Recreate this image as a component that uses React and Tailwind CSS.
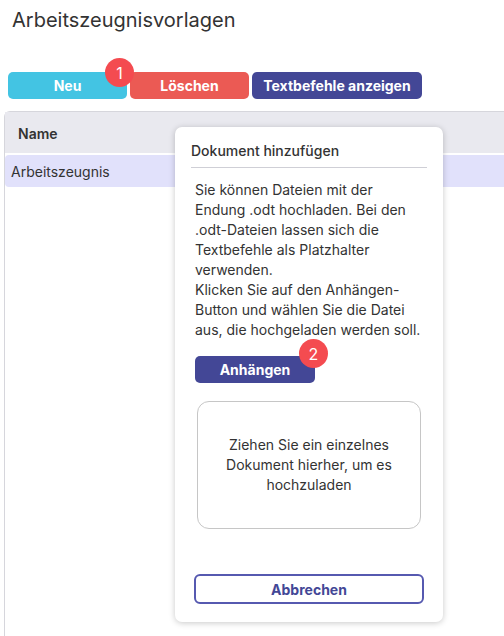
import React from "react";

export default function App() {
  return (
    <div className="relative h-[636px] w-[504px] overflow-hidden bg-white text-[#333] font-['Inter','Noto_Sans',sans-serif]">
      <h1 className="pl-[12px] pt-[7px] text-[20px] leading-[26px] font-normal text-[#333]">Arbeitszeugnisvorlagen</h1>
      <div className="mt-[39px] flex gap-[3px] pl-[8px]">
        <div className="relative">
          <button className="h-[27px] w-[119px] rounded-[5px] bg-[#43c4e3] text-[14px] font-bold text-white">Neu</button>
          <span className="absolute left-[97px] top-[-14px] flex h-[29px] w-[29px] items-center justify-center rounded-full bg-[#f44b50] text-[16px] text-white">1</span>
        </div>
        <button className="h-[27px] w-[119px] rounded-[5px] bg-[#eb5a54] text-[14px] font-bold text-white">Löschen</button>
        <button className="h-[27px] w-[170px] rounded-[5px] bg-[#434796] text-[14px] font-bold text-white">Textbefehle anzeigen</button>
      </div>
      <div className="ml-[4px] mt-[12px] h-[600px] w-[560px] rounded-tl-[6px] border-l border-t border-[#d6d6dc]">
        <div className="flex h-[41px] items-center bg-[#e9e9ef] pl-[13px] pt-[2px] text-[14px] font-semibold text-[#333]">Name</div>
        <div className="mt-[2px] flex h-[32px] items-center rounded-l-[4px] bg-[#e1e1fb] pl-[6px] text-[14px] text-[#333]">Arbeitszeugnis</div>
      </div>

      <div className="absolute left-[175px] top-[127px] flex h-[495px] w-[268px] flex-col rounded-[7px] bg-white px-[16px] shadow-[0_1px_6px_rgba(0,0,0,0.22)]">
        <div className="pt-[14px] pb-[6px] text-[14px] font-medium leading-[20px] text-[#333]">Dokument hinzufügen</div>
        <div className="h-px bg-[#cfcfd6]" />
        <p className="mt-[12px] px-[4px] text-[14px] leading-[20px] text-[#333]">
          Sie können Dateien mit der Endung .odt hochladen. Bei den .odt-Dateien lassen sich die Textbefehle als Platzhalter verwenden.
          <br />
          Klicken Sie auf den Anhängen-Button und wählen Sie die Datei aus, die hochgeladen werden soll.
        </p>
        <div className="relative mt-[16px] ml-[4px] w-[120px]">
          <button className="h-[27px] w-[120px] rounded-[5px] bg-[#434796] text-[14px] font-bold text-white">Anhängen</button>
          <span className="absolute left-[104px] top-[-17px] flex h-[29px] w-[29px] items-center justify-center rounded-full bg-[#f44b50] text-[16px] text-white">2</span>
        </div>
        <div className="mx-[6px] mt-[18px] flex h-[128px] items-center justify-center rounded-[12px] border border-[#c6c6c6] px-[20px] text-center text-[14px] leading-[20px] text-[#333]">
          Ziehen Sie ein einzelnes Dokument hierher, um es hochzuladen
        </div>
        <button className="mx-[3px] mt-[45px] h-[30px] rounded-[6px] border-2 border-[#5659b0] text-[14px] font-bold text-[#434796]">Abbrechen</button>
      </div>
    </div>
  );
}
